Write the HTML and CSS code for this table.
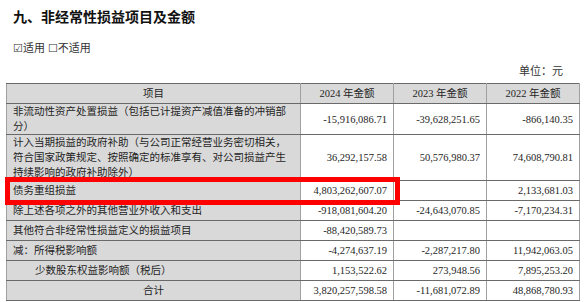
FILE: index.html
```html
<!DOCTYPE html>
<html lang="zh-CN">
<head>
  <meta charset="UTF-8">
  <title>非经常性损益项目及金额</title>
  <link rel="stylesheet" href="styles.css">
</head>
<body>
  <div class="page">
    <h1 class="title">九、非经常性损益项目及金额</h1>
    <div class="check">☑适用 ☐不适用</div>
    <div class="unit">单位：元</div>

    <div class="table-wrap">
      <table class="gains">
        <colgroup>
          <col class="c-item">
          <col class="c-num">
          <col class="c-num">
          <col class="c-num">
        </colgroup>
        <tr class="head">
          <td>项目</td>
          <td>2024 年金额</td>
          <td>2023 年金额</td>
          <td>2022 年金额</td>
        </tr>
        <tr class="two">
          <td class="item">非流动性资产处置损益（包括已计提资产减值准备的冲销部分）</td>
          <td>-15,916,086.71</td>
          <td>-39,628,251.65</td>
          <td>-866,140.35</td>
        </tr>
        <tr class="three">
          <td class="item">计入当期损益的政府补助（与公司正常经营业务密切相关，符合国家政策规定、按照确定的标准享有、对公司损益产生持续影响的政府补助除外）</td>
          <td>36,292,157.58</td>
          <td>50,576,980.37</td>
          <td>74,608,790.81</td>
        </tr>
        <tr>
          <td class="item">债务重组损益</td>
          <td>4,803,262,607.07</td>
          <td></td>
          <td>2,133,681.03</td>
        </tr>
        <tr>
          <td class="item">除上述各项之外的其他营业外收入和支出</td>
          <td>-918,081,604.20</td>
          <td>-24,643,070.85</td>
          <td>-7,170,234.31</td>
        </tr>
        <tr>
          <td class="item">其他符合非经常性损益定义的损益项目</td>
          <td>-88,420,589.73</td>
          <td></td>
          <td></td>
        </tr>
        <tr>
          <td class="item">减：所得税影响额</td>
          <td>-4,274,637.19</td>
          <td>-2,287,217.80</td>
          <td>11,942,063.05</td>
        </tr>
        <tr>
          <td class="item indent">少数股东权益影响额（税后）</td>
          <td>1,153,522.62</td>
          <td>273,948.56</td>
          <td>7,895,253.20</td>
        </tr>
        <tr>
          <td class="item total">合计</td>
          <td>3,820,257,598.58</td>
          <td>-11,681,072.89</td>
          <td>48,868,780.93</td>
        </tr>
      </table>
      <div class="mark"></div>
    </div>
  </div>
</body>
</html>
```
FILE: styles.css
```css
body {
  margin: 0;
  background-color: #fff;
  color: #1e1e1e;
  font-family: "Liberation Serif", "Noto Sans CJK SC", serif;
}
.page {
  width: 587px;
  height: 302px;
  overflow: hidden;
}
.title {
  margin: 6px 0 0 13px;
  font-family: "Noto Sans CJK SC", sans-serif;
  font-size: 14px;
  line-height: 20px;
  font-weight: bold;
  color: #111;
}
.check {
  margin: 14px 0 0 13px;
  font-size: 11px;
  line-height: 16px;
  color: #333;
}
.unit {
  margin: 7px 24px 0 0;
  text-align: right;
  font-size: 11px;
  line-height: 16px;
  color: #333;
}
.table-wrap {
  position: relative;
  margin: 4px 0 0 6px;
  width: 574px;
}
.gains {
  width: 574px;
  border-collapse: collapse;
  table-layout: fixed;
  font-size: 10.5px;
}
.c-item {
  width: 294px;
}
.c-num {
  width: 93px;
}
.gains td {
  border-top: 1px solid #6a6a6a;
  border-bottom: 1px solid #6a6a6a;
  border-left: 1px solid #a0a0a0;
  border-right: 1px solid #a0a0a0;
  padding: 2px 6px 2px 6px;
  line-height: 15px;
  text-align: right;
  vertical-align: middle;
  white-space: nowrap;
}
.gains td.item {
  background-color: #d9d9d9;
  text-align: left;
  white-space: normal;
}
.gains td.indent {
  padding-left: 28px;
}
.gains td.total {
  text-align: center;
}
.gains .head td {
  background-color: #d9d9d9;
  text-align: center;
  height: 15px;
}
.gains .two td {
  padding-top: 0;
  padding-bottom: 0;
}
.gains .three td {
  padding-top: 0;
  padding-bottom: 0;
}
.mark {
  position: absolute;
  left: -1px;
  top: 94px;
  width: 385px;
  height: 18px;
  border: 5px solid #f00;
}
```
